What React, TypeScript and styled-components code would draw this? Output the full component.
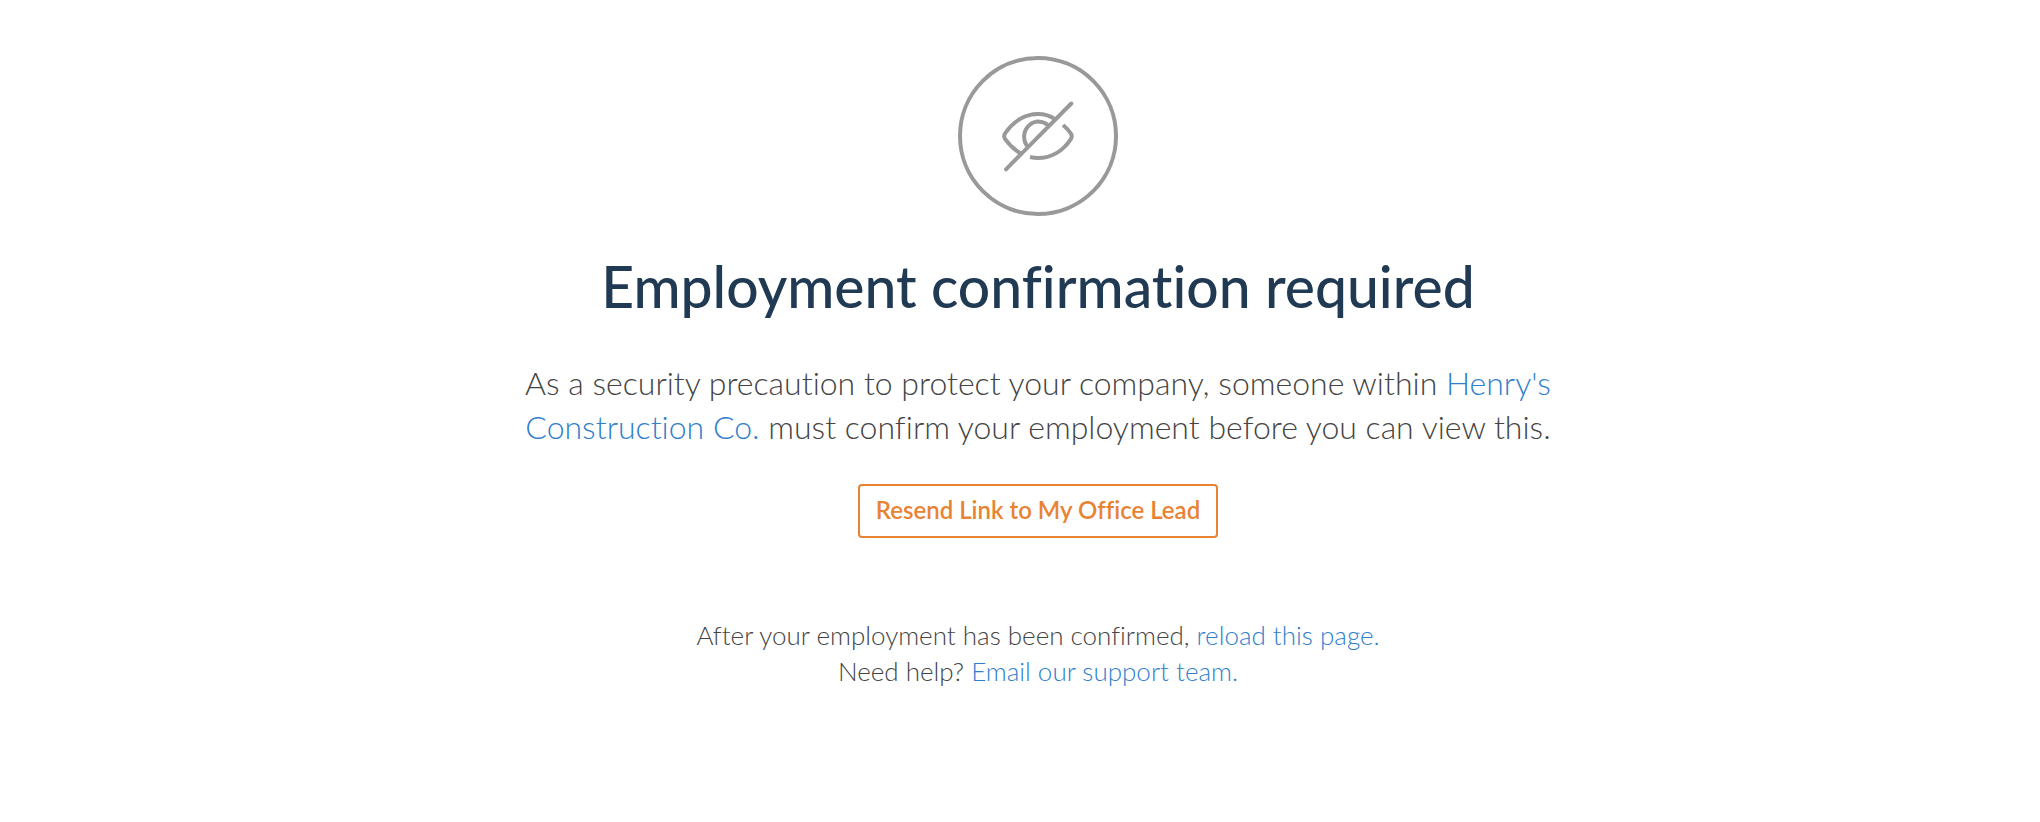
import React from "react";
import styled, { createGlobalStyle } from "styled-components";

const GlobalStyle = createGlobalStyle`
  * { box-sizing: border-box; }
  body {
    margin: 0;
    background: #ffffff;
    color: #444444;
    font-family: Lato, "Liberation Sans", sans-serif;
    font-variant-ligatures: none;
  }
`;

const Page = styled.main`
  display: flex;
  flex-direction: column;
  align-items: center;
  padding: 56px 24px 120px 60px;
  text-align: center;
`;

const StatusIcon = styled.svg`
  display: block;
  width: 160px;
  height: 160px;
  fill: none;
  stroke: #999999;
  stroke-width: 4;
`;

const Title = styled.h1`
  margin: 34px 0 0;
  color: #203a54;
  font-size: 57px;
  font-weight: 500;
  line-height: 72px;
`;

const Message = styled.p`
  max-width: 1060px;
  margin: 39px 0 0;
  font-size: 32px;
  font-weight: 300;
  line-height: 44px;
`;

const Link = styled.a`
  color: #3080cc;
  text-decoration: none;

  &:hover { text-decoration: underline; }
`;

const ResendButton = styled.button`
  margin: 35px 0 0;
  padding: 10px 16px 12px;
  border: 2px solid #e98334;
  border-radius: 4px;
  background: #ffffff;
  color: #e98334;
  font-family: inherit;
  font-size: 24px;
  font-weight: 600;
  line-height: 28px;
  cursor: pointer;
  font-variant-ligatures: none;
`;

const Help = styled.p`
  margin: 79px 0 0;
  font-size: 26px;
  font-weight: 300;
  line-height: 36px;
`;

function HiddenEyeIcon() {
  return (
    <StatusIcon viewBox="0 0 160 160" aria-hidden="true">
      <circle cx="80" cy="80" r="78" />
      <path d="M48 113.3 113.3 47.5" strokeLinecap="round" />
      <path d="M97.5 63.5C92 59.5 86 58 80 58C67 58 55 65.500 47 77.500Q45.500 80.300 47 82.800C51.500 89 56.500 94 62.500 97.300" />
      <path d="M105 69C108 71.500 111 74.500 113 77.700Q114.500 80.300 113 82.800C105 95 93 102 80 102Q76 102 72 101" />
      <path d="M91.500 70.500A14 14.500 0 0 0 70 91" />
    </StatusIcon>
  );
}

export default function App() {
  return (
    <>
      <GlobalStyle />
      <Page>
        <HiddenEyeIcon />
        <Title>Employment confirmation required</Title>
        <Message>
          As a security precaution to protect your company, someone within{" "}
          <Link href="#company">Henry's Construction Co.</Link> must confirm your
          employment before you can view this.
        </Message>
        <ResendButton type="button">Resend Link to My Office Lead</ResendButton>
        <Help>
          After your employment has been confirmed,{" "}
          <Link href="#reload">reload this page.</Link>
          <br />
          Need help? <Link href="#support">Email our support team.</Link>
        </Help>
      </Page>
    </>
  );
}
